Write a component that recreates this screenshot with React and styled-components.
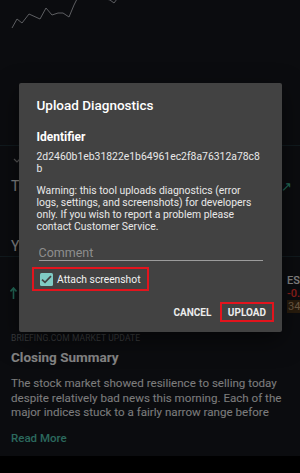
import React from 'react';
import styled, { createGlobalStyle, css } from 'styled-components';

const GlobalStyle = createGlobalStyle`
    html, body {
        margin: 0;
        padding: 0;
        background: #000;
    }
    body {
        font-family: Roboto, "Noto Sans", "Liberation Sans", sans-serif;
        -webkit-font-smoothing: antialiased;
    }
`;

const chartPoints = '12,28 17,19 22,23 29,14 40,19 46,8 52,15 58,13 63,13 69,17 74,5 77,-1 106,-1 110,0 114,3 117,-1';

const App = () => {
    return (
        <>
            <GlobalStyle />
            <Page>
                <ChartBox>
                    <svg width="300" height="60" viewBox="0 0 300 60">
                        <polyline points={chartPoints} fill="none" stroke="#a9abb0" strokeWidth="1" />
                    </svg>
                </ChartBox>
                <Divider />
                <ChevronRow>
                    <svg width="8" height="6" viewBox="0 0 8 6">
                        <path d="M1 1 L4 4 L7 1" fill="none" stroke="#9a9a9a" strokeWidth="1.2" />
                    </svg>
                </ChevronRow>
                <TabRow>
                    <RowLabel>Top</RowLabel>
                    <TealIcon>↗</TealIcon>
                </TabRow>
                <TabRow $gap={0}>
                    <RowLabel>Your</RowLabel>
                </TabRow>
                <Divider />
                <QuoteRow>
                    <UpArrow>
                        <svg width="7" height="12" viewBox="0 0 7 12">
                            <path d="M3.5 12 V2 M0.5 4.5 L3.5 1 L6.5 4.5" fill="none" stroke="#3fbf9f" strokeWidth="1.6" />
                        </svg>
                    </UpArrow>
                    <Quote>
                        <Symbol>ES</Symbol>
                        <Change>-0.</Change>
                        <Badge>34</Badge>
                    </Quote>
                </QuoteRow>
                <Article>
                    <Source>BRIEFING.COM MARKET UPDATE</Source>
                    <Headline>Closing Summary</Headline>
                    <Summary>
                        The stock market showed resilience to selling today despite relatively bad news this morning. Each of the major indices stuck to a fairly narrow range before
                    </Summary>
                    <ReadMore>Read More</ReadMore>
                </Article>
                <Footer />

                <Overlay>
                    <Dialog>
                        <Title>Upload Diagnostics</Title>
                        <Label>Identifier</Label>
                        <Hash>2d2460b1eb31822e1b64961ec2f8a76312a78c8b</Hash>
                        <Warning>
                            Warning: this tool uploads diagnostics (error logs, settings, and screenshots) for developers only. If you wish to report a problem please contact Customer Service.
                        </Warning>
                        <Comment placeholder="Comment" />
                        <CheckRow $highlight>
                            <CheckBox>
                                <svg width="11" height="9" viewBox="0 0 11 9">
                                    <path d="M1 4.6 L4 7.4 L10 1.2" fill="none" stroke="#424242" strokeWidth="1.7" />
                                </svg>
                            </CheckBox>
                            <CheckText>Attach screenshot</CheckText>
                        </CheckRow>
                        <Actions>
                            <ActionButton>Cancel</ActionButton>
                            <ActionButton $highlight>Upload</ActionButton>
                        </Actions>
                    </Dialog>
                </Overlay>
            </Page>
        </>
    );
};

const highlight = css`
    border: 2.5px solid #e3141d;
`;

const Page = styled.div`
    position: relative;
    width: 300px;
    height: 473px;
    overflow: hidden;
    background-color: #14161d;
    display: flex;
    flex-direction: column;
`;

const ChartBox = styled.div`
    height: 145px;
    svg {
        display: block;
    }
`;

const Divider = styled.div`
    height: 1px;
    background-color: #1f3037;
`;

const ChevronRow = styled.div`
    height: 30px;
    display: flex;
    align-items: center;
    padding-left: 13px;
`;

const TabRow = styled.div`
    height: 20px;
    margin-bottom: ${p => (p.$gap ?? 40)}px;
    display: flex;
    align-items: center;
    justify-content: space-between;
    padding: 0 8px 0 11px;
`;

const RowLabel = styled.span`
    font-size: 14px;
    color: #f2f2f2;
`;

const TealIcon = styled.span`
    font-size: 13px;
    color: #3fbf9f;
`;

const QuoteRow = styled.div`
    height: 65px;
    padding: 17px 0 0 10px;
    box-sizing: border-box;
    display: flex;
    justify-content: space-between;
`;

const UpArrow = styled.div`
    padding-top: 10px;
`;

const Quote = styled.div`
    width: 13px;
    display: flex;
    flex-direction: column;
    align-items: flex-start;
    font-size: 11px;
    line-height: 13px;
    white-space: nowrap;
`;

const Symbol = styled.span`
    color: #f0f0f0;
    font-weight: 500;
`;

const Change = styled.span`
    color: #ff3a30;
    font-weight: 500;
`;

const Badge = styled.span`
    color: #c4a07a;
    background-color: #4a3418;
    padding: 0 2px 0 1px;
`;

const Article = styled.div`
    padding: 10px 11px;
    display: flex;
    flex-direction: column;
`;

const Source = styled.div`
    font-size: 8.5px;
    line-height: 12px;
    color: #6e7074;
    letter-spacing: 0.1px;
`;

const Headline = styled.div`
    margin-top: 4px;
    font-size: 13.5px;
    line-height: 18px;
    font-weight: 700;
    color: #f0f0f0;
`;

const Summary = styled.div`
    margin-top: 10px;
    font-size: 11.6px;
    line-height: 14.6px;
    color: #e2e2e2;
`;

const ReadMore = styled.div`
    margin-top: 10px;
    font-size: 11.5px;
    line-height: 16px;
    font-weight: 500;
    color: #4fbfa8;
`;

const Footer = styled.div`
    flex: 1;
    background-color: #000;
`;

const Overlay = styled.div`
    position: absolute;
    inset: 0;
    background-color: rgba(0, 0, 0, 0.45);
    display: flex;
    justify-content: center;
    align-items: flex-start;
    padding-top: 83px;
`;

const Dialog = styled.div`
    width: 263px;
    box-sizing: border-box;
    padding: 12px 19px 10px 18px;
    background-color: #424242;
    border-radius: 2px;
    box-shadow: 0 8px 24px rgba(0, 0, 0, 0.5);
    display: flex;
    flex-direction: column;
    color: #e8e8e8;
`;

const Title = styled.div`
    font-size: 13.5px;
    line-height: 20px;
    font-weight: 500;
    color: #ffffff;
`;

const Label = styled.div`
    margin-top: 14px;
    font-size: 12px;
    line-height: 16px;
    font-weight: 700;
    color: #ffffff;
`;

const Hash = styled.div`
    margin-top: 6px;
    font-size: 10.4px;
    line-height: 12px;
    word-break: break-all;
`;

const Warning = styled.div`
    margin-top: 10px;
    font-size: 10.4px;
    line-height: 12px;
`;

const Comment = styled.input`
    margin: 11px 0 0 2px;
    padding: 0;
    height: 16px;
    border: none;
    border-bottom: 1px solid #9c9c9c;
    background: transparent;
    font-family: inherit;
    font-size: 12.5px;
    color: #ffffff;
    outline: none;

    &::placeholder {
        color: #8e8e8e;
    }
`;

const CheckRow = styled.label`
    align-self: flex-start;
    margin: 6px 0 0 -5px;
    height: 24px;
    box-sizing: border-box;
    padding: 0 6px 0 6.5px;
    display: inline-flex;
    align-items: center;
    gap: 4px;
    border: 2.5px solid transparent;
    ${p => p.$highlight && highlight}
`;

const CheckBox = styled.span`
    width: 13px;
    height: 13px;
    border-radius: 1.5px;
    background-color: #80cbc4;
    display: flex;
    align-items: center;
    justify-content: center;
`;

const CheckText = styled.span`
    font-size: 10.3px;
    font-weight: 400;
    color: #f2f2f2;
`;

const Actions = styled.div`
    margin: 11px -11px 0 0;
    display: flex;
    justify-content: flex-end;
    align-items: center;
    gap: 9px;
`;

const ActionButton = styled.div`
    height: 20px;
    box-sizing: border-box;
    padding: 0 ${p => (p.$highlight ? '5.5px' : '0')};
    display: flex;
    align-items: center;
    font-size: 10px;
    font-weight: 700;
    text-transform: uppercase;
    color: #ececec;
    ${p => p.$highlight && highlight}
`;

export default App;
